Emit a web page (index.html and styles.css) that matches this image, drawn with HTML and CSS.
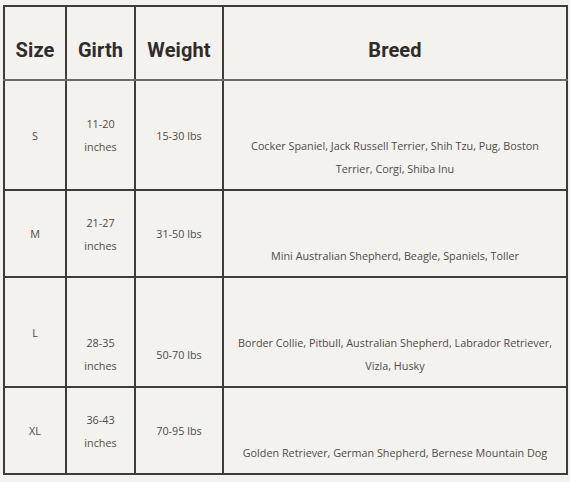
FILE: index.html
```html
<!DOCTYPE html>
<html>
<head>
<meta charset="utf-8">
<link rel="stylesheet" href="styles.css">
</head>
<body>
<table class="chart">
  <colgroup>
    <col class="c-size">
    <col class="c-girth">
    <col class="c-weight">
    <col class="c-breed">
  </colgroup>
  <thead>
    <tr class="head-row">
      <th>Size</th>
      <th>Girth</th>
      <th>Weight</th>
      <th>Breed</th>
    </tr>
  </thead>
  <tbody>
    <tr>
      <td>S</td>
      <td>11-20<br>inches</td>
      <td>15-30 lbs</td>
      <td class="low breed">Cocker Spaniel, Jack Russell Terrier, Shih Tzu, Pug, Boston Terrier, Corgi, Shiba Inu</td>
    </tr>
    <tr>
      <td>M</td>
      <td>21-27<br>inches</td>
      <td>31-50 lbs</td>
      <td class="low breed">Mini Australian Shepherd, Beagle, Spaniels, Toller</td>
    </tr>
    <tr>
      <td>L</td>
      <td class="low">28-35<br>inches</td>
      <td class="low">50-70 lbs</td>
      <td class="low breed">Border Collie, Pitbull, Australian Shepherd, Labrador Retriever, Vizla, Husky</td>
    </tr>
    <tr>
      <td>XL</td>
      <td>36-43<br>inches</td>
      <td>70-95 lbs</td>
      <td class="low breed">Golden Retriever, German Shepherd, Bernese Mountain Dog</td>
    </tr>
  </tbody>
</table>
</body>
</html>
```

FILE: styles.css
```css
html, body {
  margin: 0;
  background: #f4f2ee;
}
body {
  padding: 5px 0 0 3px;
}
.chart {
  border-collapse: collapse;
  width: 563px;
  table-layout: fixed;
  font-family: "Open Sans", sans-serif;
  color: #4f4c48;
}
.c-size { width: 62px; }
.c-girth { width: 69px; }
.c-weight { width: 88px; }
.c-breed { width: 344px; }
.chart th, .chart td {
  border: 2px solid #3f3c38;
  text-align: center;
  vertical-align: middle;
}
.head-row th {
  border-bottom: 2px solid #6f6c67;
  height: 48px;
  padding: 19px 4px 5px;
  font-family: Roboto, "Liberation Sans", sans-serif;
  font-weight: 700;
  font-size: 20px;
  color: #2f2c29;
  letter-spacing: 0.1px;
}
.chart td {
  padding: 9px 10px;
  font-size: 10.8px;
  line-height: 23px;
}
.chart td.low {
  padding-top: 53px;
}
.chart td.breed {
  padding-left: 12px;
  padding-right: 12px;
}
```
